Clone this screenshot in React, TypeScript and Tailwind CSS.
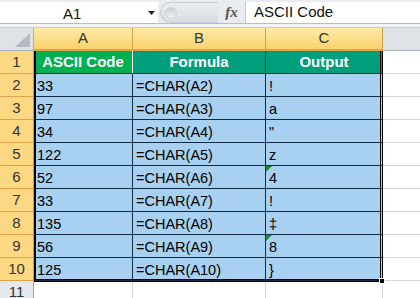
import React from "react";

const rows: { a: string; b: string; c: string; tri?: boolean }[] = [
  { a: "33", b: "=CHAR(A2)", c: "!" },
  { a: "97", b: "=CHAR(A3)", c: "a" },
  { a: "34", b: "=CHAR(A4)", c: '"' },
  { a: "122", b: "=CHAR(A5)", c: "z" },
  { a: "52", b: "=CHAR(A6)", c: "4", tri: true },
  { a: "33", b: "=CHAR(A7)", c: "!" },
  { a: "135", b: "=CHAR(A8)", c: "‡" },
  { a: "56", b: "=CHAR(A9)", c: "8", tri: true },
  { a: "125", b: "=CHAR(A10)", c: "}" },
];

const font = { fontFamily: '"Liberation Sans", Arial, sans-serif' };

function RowHead({ n, sel = true }: { n: number; sel?: boolean }) {
  return (
    <div
      className={
        "h-[23px] flex items-center justify-center border-r border-b text-[15px] text-[#333] " +
        (sel
          ? "bg-[#fcd883] border-r-[#d99a3e] border-b-[#e3a24a]"
          : "bg-[#e4e7ec] border-r-[#9aa3ae] border-b-[#c4c9d0]")
      }
    >
      {n}
    </div>
  );
}

function Cell({ children, tri }: { children?: React.ReactNode; tri?: boolean }) {
  return (
    <div className="relative h-[23px] bg-[#a8d0f0] border-r border-b border-[#0f2a45] pl-[3px] pt-[3px] text-[14.5px] leading-[18px] text-black whitespace-nowrap">
      {tri && (
        <svg className="absolute left-0 top-0" width="6" height="6" viewBox="0 0 6 6">
          <polygon points="0,0 6,0 0,6" fill="#1f8a2e" />
        </svg>
      )}
      {children}
    </div>
  );
}

function Blank({ last }: { last?: boolean }) {
  return <div className={"h-[23px] bg-white border-b border-[#d4d4d4] " + (last ? "" : "border-r")} />;
}

export default function App() {
  return (
    <div className="w-[420px] h-[298px] overflow-hidden bg-white select-none" style={font}>
      {/* Formula bar */}
      <div className="h-[24px] bg-[#e8ebef] flex items-start pt-[2px] border-b border-[#b9bdc3]">
        <div className="w-[158px] h-[21px] bg-white flex items-center relative">
          <span className="absolute left-[63px] top-[1px] text-[15px] text-[#111]">A1</span>
          <svg className="absolute left-[148px] top-[9px]" width="7" height="4" viewBox="0 0 7 4">
            <polygon points="0,0 7,0 3.5,4" fill="#222" />
          </svg>
        </div>
        <div className="ml-[2px] w-[58px] h-[21px] rounded-l-full bg-linear-to-b from-[#eceef1] to-[#d8dbe0] border border-[#c9cdd3] border-r-0 flex items-center pl-[4px]">
          <div className="w-[12px] h-[12px] rounded-full bg-linear-to-b from-[#c8ccd2] to-[#f2f3f5] border border-[#d0d3d8]" />
        </div>
        <div className="w-[27px] h-[21px] flex items-center justify-center">
          <span
            className="italic font-bold text-[15px] text-[#555]"
            style={{ fontFamily: '"Liberation Serif", "Times New Roman", serif' }}
          >
            fx
          </span>
        </div>
        <div className="flex-1 h-[21px] bg-white border-l border-[#c6c9ce] pl-[8px] flex items-center text-[15px] text-[#111]">
          ASCII Code
        </div>
      </div>
      <div className="h-[4px] bg-[#f3f4f6] border-b border-[#c9ccd1]" />

      {/* Grid */}
      <div className="relative">
        <div className="grid grid-cols-[34px_99px_133px_117px_1fr]">
          {/* header row */}
          <div className="h-[23px] bg-[#dfe3e8] border-r border-b border-[#a9afb7] relative">
            <svg className="absolute right-[3px] bottom-[3px]" width="15" height="14" viewBox="0 0 15 14">
              <polygon points="15,0 15,14 0,14" fill="#b5bac2" />
            </svg>
          </div>
          {["A", "B", "C"].map((l) => (
            <div
              key={l}
              className="h-[23px] bg-linear-to-b from-[#feeaa6] to-[#f9d26c] border-r border-r-[#d9a04c] border-b-2 border-b-[#e0a54f] flex items-center justify-center text-[15px] text-[#333]"
            >
              {l}
            </div>
          ))}
          <div className="h-[23px] bg-[#dfe3e8] border-b border-[#a9afb7]" />

          {/* row 1 */}
          <RowHead n={1} />
          <div className="h-[23px] bg-[#00b050] border-r border-white border-b border-b-[#0f2a45] flex items-center justify-center text-white font-bold text-[15px]">
            ASCII Code
          </div>
          <div className="h-[23px] bg-[#009e7b] border-r border-[#0b4d44] border-b border-b-[#0f2a45] flex items-center justify-center text-white font-bold text-[15px]">
            Formula
          </div>
          <div className="h-[23px] bg-[#009e7b] border-r border-[#0f2a45] border-b border-b-[#0f2a45] flex items-center justify-center text-white font-bold text-[15px]">
            Output
          </div>
          <Blank last />

          {rows.map((r, i) => (
            <React.Fragment key={i}>
              <RowHead n={i + 2} />
              <Cell>{r.a}</Cell>
              <Cell>{r.b}</Cell>
              <Cell tri={r.tri}>{r.c}</Cell>
              <Blank last />
            </React.Fragment>
          ))}

          {/* row 11 */}
          <RowHead n={11} sel={false} />
          <Blank />
          <Blank />
          <Blank />
          <Blank last />
        </div>

        {/* selection outline */}
        <div className="absolute left-[34px] top-[23px] w-[349px] h-[231px] pointer-events-none border-l-2 border-l-black border-r-[3px] border-r-black border-b-[3px] border-b-black border-double" />
        <div className="absolute left-[379px] top-[250px] w-[6px] h-[6px] bg-black border border-white pointer-events-none" />
      </div>
    </div>
  );
}
